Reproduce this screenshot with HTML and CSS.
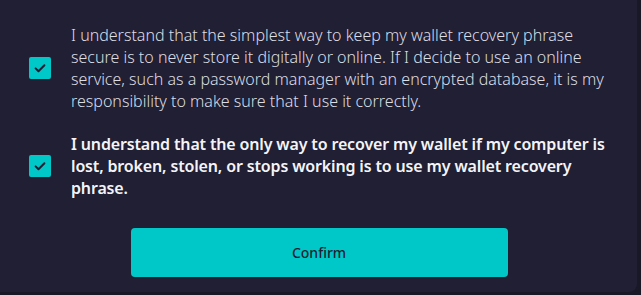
FILE: index.html
```html
<!DOCTYPE html>
<html lang="en">
<head>
<meta charset="utf-8">
<link rel="stylesheet" href="styles.css">
</head>
<body>
<div class="panel">
  <div class="items">
    <label class="item">
      <span class="box"><svg viewBox="0 0 22 22" width="22" height="22"><path d="M6.6 11.4 L9.5 14.2 L15.4 8.2" fill="none" stroke="#1f1e33" stroke-width="2" stroke-linecap="round" stroke-linejoin="round"/></svg></span>
      <span class="text light">I understand that the simplest way to keep my wallet recovery phrase secure is to never store it digitally or online. If I decide to use an online service, such as a password manager with an encrypted database, it is my responsibility to make sure that I use it correctly.</span>
    </label>
    <label class="item">
      <span class="box"><svg viewBox="0 0 22 22" width="22" height="22"><path d="M6.6 11.4 L9.5 14.2 L15.4 8.2" fill="none" stroke="#1f1e33" stroke-width="2" stroke-linecap="round" stroke-linejoin="round"/></svg></span>
      <span class="text bold">I understand that the only way to recover my wallet if my computer is lost, broken, stolen, or stops working is to use my wallet recovery phrase.</span>
    </label>
  </div>
  <div class="actions">
    <button class="confirm">Confirm</button>
  </div>
</div>
</body>
</html>
```

FILE: styles.css
```css
html, body {
  margin: 0;
  padding: 0;
}
body {
  background: #191827;
  width: 641px;
  height: 295px;
  overflow: hidden;
  font-family: "Noto Sans", "Open Sans", sans-serif;
}
.panel {
  width: 637px;
  height: 292px;
  background: #201f33;
  border-bottom-right-radius: 8px;
  box-sizing: border-box;
  padding: 24px 0 0 29px;
}
.items {
  display: flex;
  flex-direction: column;
  gap: 21px;
}
.item {
  display: flex;
  align-items: center;
  gap: 20px;
}
.box {
  flex: none;
  width: 22px;
  height: 22px;
  border-radius: 2px;
  background: #00c8c8;
  display: flex;
}
.text {
  width: 545px;
  font-size: 16px;
  line-height: 22px;
}
.light {
  font-weight: 300;
  color: #dcdce4;
}
.bold {
  font-weight: 600;
  letter-spacing: -0.15px;
  color: #f4f4f8;
}
.actions {
  display: flex;
  justify-content: center;
  padding-top: 29px;
  padding-right: 28px;
}
.confirm {
  width: 377px;
  height: 49px;
  border: none;
  border-radius: 4px;
  background: #00c8c8;
  color: #1f1e33;
  font-family: "Noto Sans", "Open Sans", sans-serif;
  font-size: 14px;
  font-weight: 500;
  cursor: pointer;
}
```
